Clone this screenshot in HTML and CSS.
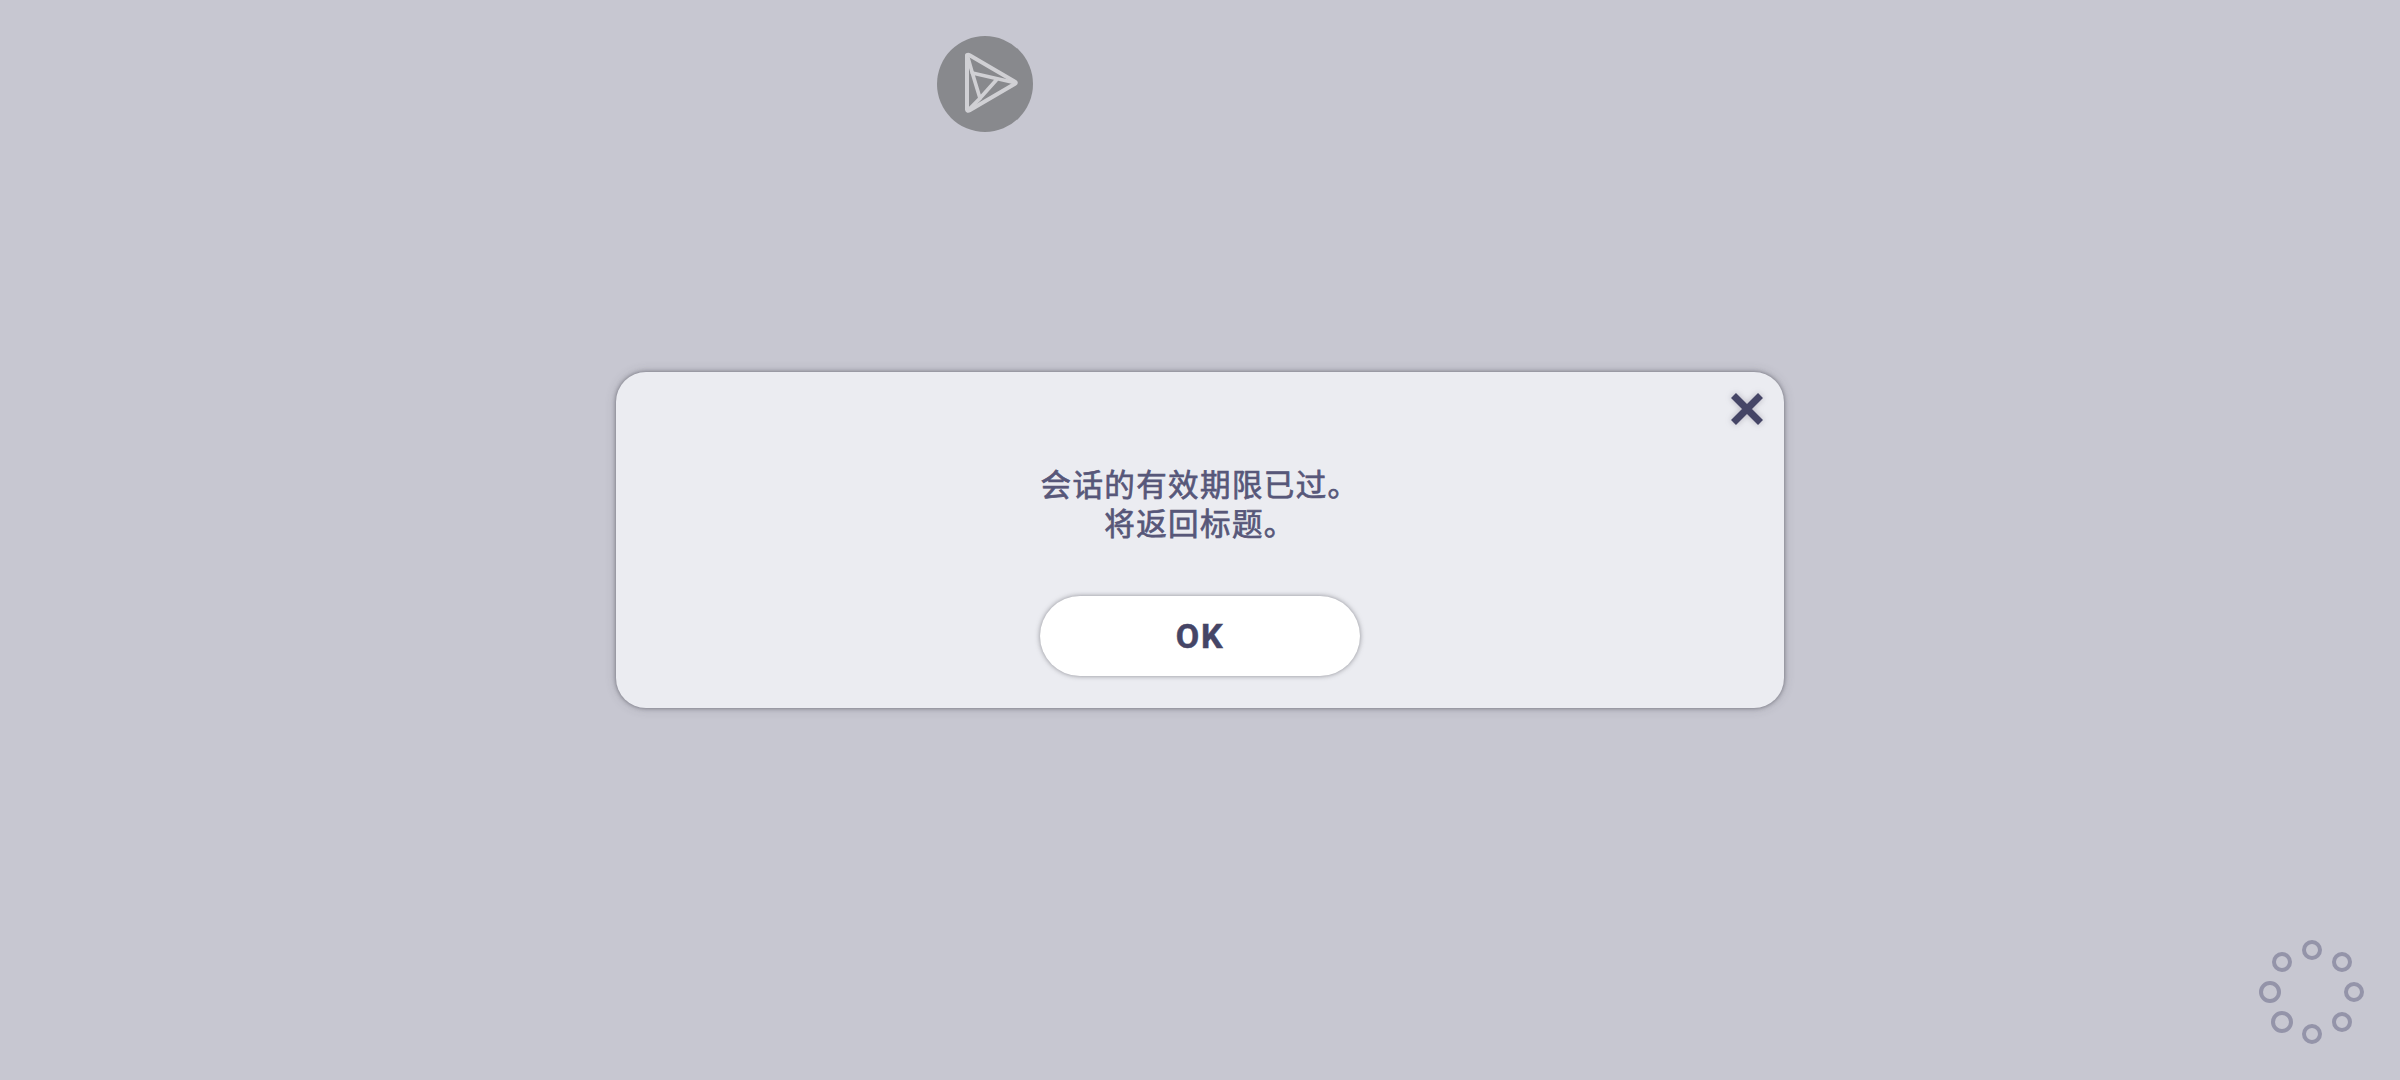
FILE: index.html
```html
<!DOCTYPE html>
<html lang="zh-CN">
<head>
    <meta charset="UTF-8">
    <meta name="viewport" content="width=device-width, initial-scale=1.0">
    <title>提示</title>
    <link rel="stylesheet" href="styles.css">
</head>
<body>
    <div class="screen">
        <svg class="launcher" viewBox="0 0 288 288">
            <circle class="launcher-bg" cx="144" cy="144" r="144"/>
            <path class="launcher-edge" d="M90 57 Q94 55 98 58 L234 137 Q239 140 234 143 L98 223 Q91 227 90 221 Z"/>
            <path d="M92 62 L106 111 L234 140"/>
            <path d="M106 111 L129 187 L178 132"/>
            <path d="M129 187 L94 222"/>
        </svg>

        <div class="dialog">
            <button class="close" aria-label="关闭">
                <svg viewBox="0 0 32 32">
                    <path d="M2.5 2.5 L29.5 29.5 M29.5 2.5 L2.5 29.5"/>
                </svg>
            </button>
            <p class="message">会话的有效期限已过。<br>将返回标题。</p>
            <button class="ok">OK</button>
        </div>

        <svg class="loading" viewBox="0 0 108 108">
            <circle cx="54" cy="12" r="8"/>
            <circle cx="84" cy="24" r="8"/>
            <circle cx="96" cy="54" r="8"/>
            <circle cx="84" cy="84" r="8"/>
            <circle cx="54" cy="96" r="8"/>
            <circle cx="24" cy="84" r="9"/>
            <circle cx="12" cy="54" r="9"/>
            <circle cx="24" cy="24" r="8"/>
        </svg>
    </div>
</body>
</html>
```
FILE: styles.css
```css
body {
    margin: 0;
    background-color: #c7c7d1;
    font-family: "Noto Sans CJK SC", sans-serif;
}

.screen {
    position: relative;
    display: flex;
    align-items: center;
    justify-content: center;
    height: 100vh;
    overflow: hidden;
}

button {
    padding: 0;
    border: none;
    cursor: pointer;
}

/* floating button over the page */
.launcher {
    position: absolute;
    top: 36px;
    left: 937px;
    width: 96px;
    height: 96px;
    fill: none;
    stroke: #d0d0d4;
    stroke-width: 11;
    stroke-linecap: round;
    stroke-linejoin: round;
}

.launcher .launcher-bg {
    fill: #88898d;
    stroke: none;
}

.launcher .launcher-edge {
    stroke-width: 12;
}

.dialog {
    position: relative;
    display: flex;
    flex-direction: column;
    align-items: center;
    justify-content: space-between;
    box-sizing: border-box;
    width: 1168px;
    height: 336px;
    padding: 92px 0 32px;
    background-color: #ebecf1;
    border-radius: 30px;
    box-shadow: 0 0 4px rgba(60, 60, 70, 0.6), 0 0 12px rgba(60, 60, 70, 0.2);
}

.close {
    position: absolute;
    top: 21px;
    right: 21px;
    width: 32px;
    height: 32px;
    background: none;
}

.close svg {
    display: block;
    overflow: visible;
    fill: none;
    stroke: #454566;
    stroke-width: 7;
    filter: drop-shadow(0 0 3px rgba(90, 80, 100, 0.35));
}

.message {
    margin: 0;
    color: #575779;
    font-size: 30.5px;
    line-height: 39px;
    letter-spacing: 1.4px;
    text-align: center;
    -webkit-text-stroke: 0.7px #575779;
}

.ok {
    width: 320px;
    height: 80px;
    border-radius: 40px;
    background-color: #fff;
    box-shadow: 0 0 5px rgba(60, 60, 70, 0.55);
    color: #454566;
    font-family: Roboto, "Noto Sans CJK SC", sans-serif;
    font-size: 34px;
    font-weight: 700;
    letter-spacing: 1.6px;
    -webkit-text-stroke: 0.5px #454566;
}

.loading {
    position: absolute;
    right: 34px;
    bottom: 34px;
    width: 108px;
    height: 108px;
    fill: none;
    stroke: #9494a9;
    stroke-width: 4;
}
```
